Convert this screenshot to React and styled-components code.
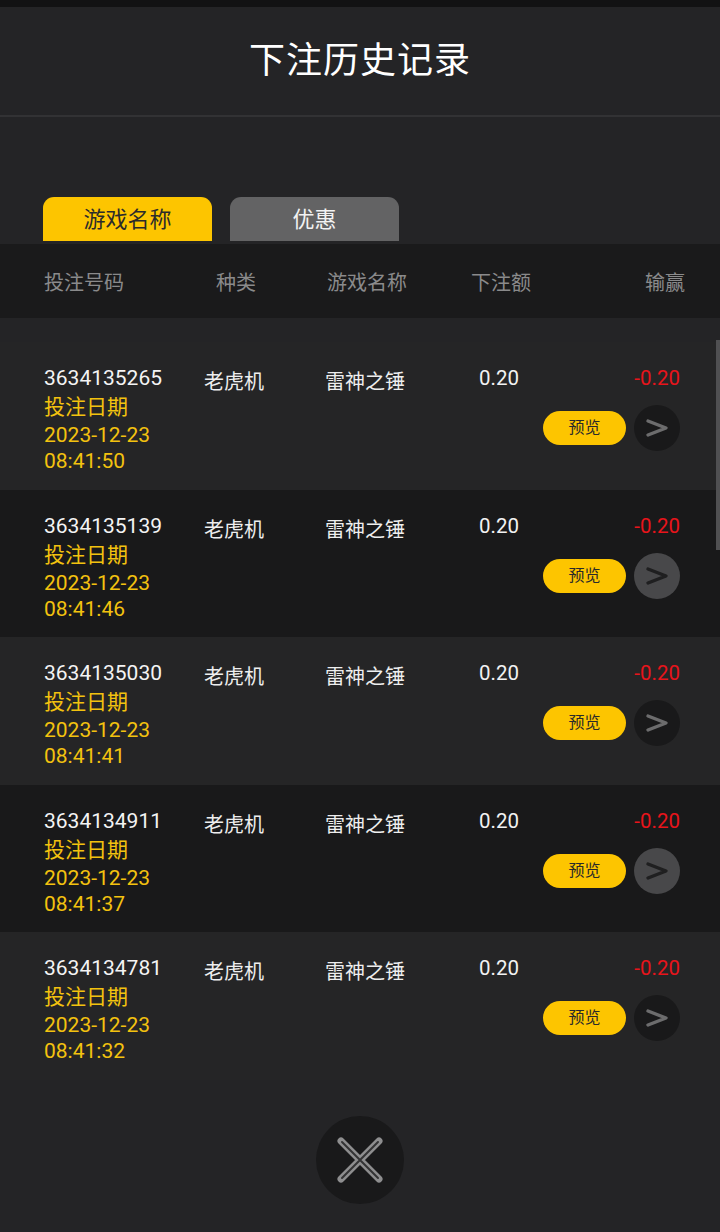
import React from "react"
import styled, { createGlobalStyle } from "styled-components"

const GlobalStyle = createGlobalStyle`
  html, body {
    margin: 0;
    padding: 0;
    background: #242426;
  }
  body {
    font-family: Roboto, "Noto Sans CJK SC", sans-serif;
    color: #f2f2f2;
  }
`

const Page = styled.div`
  position: relative;
  width: 720px;
  min-height: 1232px;
  background: #242426;
  overflow: hidden;
`

const TopStrip = styled.div`
  height: 7px;
  background: #121213;
`

const Header = styled.header`
  height: 108px;
  display: flex;
  align-items: center;
  justify-content: center;
  border-bottom: 2px solid #323234;
`

const Title = styled.h1`
  margin: 0 0 8px;
  font-size: 36px;
  font-weight: 400;
  color: #ffffff;
  letter-spacing: 1px;
`

const Tabs = styled.div`
  display: flex;
  gap: 18px;
  padding: 0 0 0 43px;
  margin-top: 80px;
`

const Tab = styled.div`
  width: 169px;
  height: 44px;
  box-sizing: border-box;
  padding-bottom: 5px;
  display: flex;
  align-items: center;
  justify-content: center;
  border-radius: 11px 11px 0 0;
  font-size: 22px;
  background: ${({ $active }) => ($active ? "#fdc500" : "#636364")};
  color: ${({ $active }) => ($active ? "#2b2b2b" : "#f2f2f2")};
`

const TableHead = styled.div`
  margin-top: 3px;
  height: 74px;
  background: #1a1a1b;
  display: grid;
  grid-template-columns: 172px 111px 144px 1fr auto;
  align-items: center;
  padding: 0 35px 0 44px;
  font-size: 20px;
  color: #8a8a8b;
`

const List = styled.div`
  padding-top: 24px;
`

const Row = styled.div`
  height: 147.5px;
  box-sizing: border-box;
  padding: 22px 40px 0 44px;
  background: ${({ $dark }) => ($dark ? "#19191a" : "#252526")};
  display: grid;
  grid-template-columns: 160px 121px 152px 1fr auto;
  align-items: start;
  font-size: 20px;
  line-height: 28px;
`

const IdCell = styled.div`
  display: flex;
  flex-direction: column;
`

const Number = styled.span`
  color: #f4f4f4;
  font-size: 21px;
`

const Yellow = styled.span`
  color: #f3c20f;
  font-size: 21px;
  line-height: ${({ $lh }) => $lh || "28px"};
`

const Cell = styled.div`
  color: #eeeeee;
  font-size: 20px;
  margin-top: 4px;
`

const Amount = styled.div`
  color: #f2f2f2;
  font-size: 20.5px;
  padding-left: 2px;
`

const ResultCell = styled.div`
  display: flex;
  flex-direction: column;
  align-items: flex-end;
`

const Loss = styled.span`
  color: #e8141b;
  font-size: 20.5px;
`

const Actions = styled.div`
  display: flex;
  align-items: center;
  gap: 8px;
  margin-top: 13px;
`

const PreviewButton = styled.div`
  width: 83px;
  height: 34px;
  border-radius: 17px;
  background: #fdc500;
  color: #2a2a2a;
  font-size: 16px;
  display: flex;
  align-items: center;
  justify-content: center;
`

const ArrowCircle = styled.div`
  width: 46px;
  height: 46px;
  border-radius: 50%;
  background: ${({ $dark }) => ($dark ? "#48484a" : "#19191a")};
  display: flex;
  align-items: center;
  justify-content: center;
`

const CloseWrap = styled.div`
  display: flex;
  justify-content: center;
  margin-top: 36px;
`

const CloseButton = styled.div`
  width: 88px;
  height: 88px;
  border-radius: 50%;
  background: #19191a;
  display: flex;
  align-items: center;
  justify-content: center;
`

const ScrollThumb = styled.div`
  position: absolute;
  right: 0;
  top: 340px;
  width: 4px;
  height: 210px;
  background: #505052;
`

const rows = [
  { id: "3634135265", time: "08:41:50" },
  { id: "3634135139", time: "08:41:46" },
  { id: "3634135030", time: "08:41:41" },
  { id: "3634134911", time: "08:41:37" },
  { id: "3634134781", time: "08:41:32" },
]

const Chevron = ({ color }) => (
  <svg width="24" height="22" viewBox="0 0 24 22">
    <path
      d="M3 4 L21 11 L3 18"
      fill="none"
      stroke={color}
      strokeWidth="3.4"
      strokeLinecap="round"
      strokeLinejoin="round"
    />
  </svg>
)

const CloseIcon = () => (
  <svg width="48" height="48" viewBox="0 0 48 48">
    <g strokeLinecap="round">
      <path d="M5 5 L43 43 M43 5 L5 43" stroke="#8e8e8f" strokeWidth="7" />
      <path d="M6 6 L42 42 M42 6 L6 42" stroke="#333334" strokeWidth="2" />
    </g>
  </svg>
)

export default function App() {
  return (
    <Page>
      <GlobalStyle />
      <TopStrip />
      <Header>
        <Title>下注历史记录</Title>
      </Header>
      <Tabs>
        <Tab $active>游戏名称</Tab>
        <Tab>优惠</Tab>
      </Tabs>
      <TableHead>
        <span>投注号码</span>
        <span>种类</span>
        <span>游戏名称</span>
        <span>下注额</span>
        <span>输赢</span>
      </TableHead>
      <List>
        {rows.map((r, i) => {
          const dark = i % 2 === 1
          return (
            <Row key={r.id} $dark={dark}>
              <IdCell>
                <Number>{r.id}</Number>
                <Yellow $lh="30px">投注日期</Yellow>
                <Yellow $lh="26px">2023-12-23</Yellow>
                <Yellow $lh="26px">{r.time}</Yellow>
              </IdCell>
              <Cell>老虎机</Cell>
              <Cell>雷神之锤</Cell>
              <Amount>0.20</Amount>
              <ResultCell>
                <Loss>-0.20</Loss>
                <Actions>
                  <PreviewButton>预览</PreviewButton>
                  <ArrowCircle $dark={dark}>
                    <Chevron color={dark ? "#1f1f20" : "#6c6c6d"} />
                  </ArrowCircle>
                </Actions>
              </ResultCell>
            </Row>
          )
        })}
      </List>
      <CloseWrap>
        <CloseButton>
          <CloseIcon />
        </CloseButton>
      </CloseWrap>
      <ScrollThumb />
    </Page>
  )
}
